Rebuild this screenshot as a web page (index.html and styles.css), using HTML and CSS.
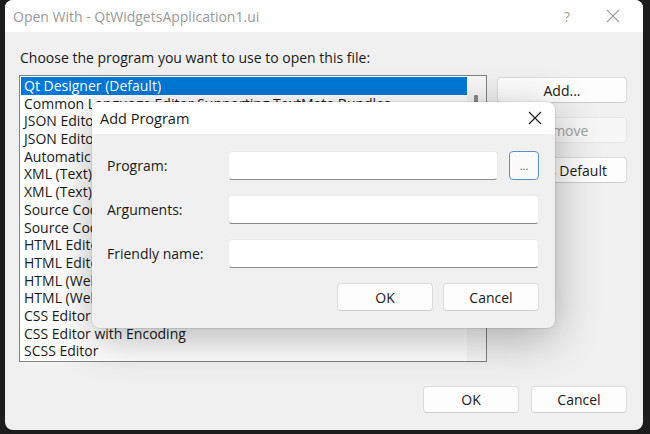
FILE: index.html
```html
<!DOCTYPE html>
<html>
<head>
<meta charset="utf-8">
<link rel="stylesheet" href="styles.css">
</head>
<body>
<div class="desk">
  <div class="win">
    <div class="titlebar">
      <span class="title">Open With - QtWidgetsApplication1.ui</span>
      <span class="tb-help">?</span>
      <span class="tb-close"><svg width="14" height="14" viewBox="0 0 14 14"><path d="M1 1L13 13M13 1L1 13" stroke="#a0a0a0" stroke-width="1.1" fill="none"/></svg></span>
    </div>
    <div class="body">
      <div class="prompt">Choose the program you want to use to open this file:</div>
      <div class="main">
        <div class="list">
          <div class="items">
            <div class="item sel">Qt Designer (Default)</div>
            <div class="item">Common Language Editor Supporting TextMate Bundles</div>
            <div class="item">JSON Editor</div>
            <div class="item">JSON Editor with Encoding</div>
            <div class="item">Automatic Editor Selector (XML)</div>
            <div class="item">XML (Text) Editor</div>
            <div class="item">XML (Text) Editor with Encoding</div>
            <div class="item">Source Code (Text) Editor</div>
            <div class="item">Source Code (Text) Editor With Encoding</div>
            <div class="item">HTML Editor</div>
            <div class="item">HTML Editor with Encoding</div>
            <div class="item">HTML (Web Forms) Editor</div>
            <div class="item">HTML (Web Forms) Editor with Encoding</div>
            <div class="item">CSS Editor</div>
            <div class="item">CSS Editor with Encoding</div>
            <div class="item">SCSS Editor</div>
          </div>
          <div class="scroll"><div class="thumb"></div></div>
        </div>
        <div class="side">
          <div class="btn side-btn">Add...</div>
          <div class="btn side-btn disabled">Remove</div>
          <div class="btn side-btn">Set as Default</div>
        </div>
      </div>
      <div class="bottom">
        <div class="btn bot-btn">OK</div>
        <div class="btn bot-btn">Cancel</div>
      </div>
    </div>
  </div>

  <div class="dlg">
    <div class="dlg-title">
      <span class="dlg-name">Add Program</span>
      <span class="dlg-close"><svg width="14" height="14" viewBox="0 0 14 14"><path d="M1 1L13 13M13 1L1 13" stroke="#1a1a1a" stroke-width="1.1" fill="none"/></svg></span>
    </div>
    <div class="dlg-body">
      <div class="row">
        <div class="lbl">Program:</div>
        <div class="inp short"></div>
        <div class="browse">...</div>
      </div>
      <div class="row">
        <div class="lbl">Arguments:</div>
        <div class="inp"></div>
      </div>
      <div class="row">
        <div class="lbl">Friendly name:</div>
        <div class="inp"></div>
      </div>
      <div class="dlg-btns">
        <div class="btn dlg-btn">OK</div>
        <div class="btn dlg-btn">Cancel</div>
      </div>
    </div>
  </div>
</div>
</body>
</html>
```

FILE: styles.css
```css
html, body {
  margin: 0;
  padding: 0;
}
body {
  background: #1c1c1c;
  font-family: "Open Sans", "Noto Sans", sans-serif;
  font-size: 14px;
  color: #1a1a1a;
}
.desk {
  position: relative;
  width: 650px;
  height: 434px;
  overflow: hidden;
}
.win {
  margin-left: 5px;
  width: 638px;
  height: 430px;
  background: #f0f0f0;
  border-radius: 8px;
  overflow: hidden;
  display: flex;
  flex-direction: column;
}
.titlebar {
  height: 32px;
  background: #ffffff;
  display: flex;
  align-items: center;
  padding-left: 8px;
}
.title {
  color: #9a9a9a;
  flex: 1;
  font-size: 14px;
}
.tb-help {
  color: #a0a0a0;
  font-size: 14px;
  width: 46px;
  text-align: center;
}
.tb-close {
  width: 46px;
  margin-right: 7px;
  display: flex;
  justify-content: center;
}
.body {
  flex: 1;
  display: flex;
  flex-direction: column;
  padding: 0 16px 0 14px;
}
.prompt {
  margin-top: 16px;
  height: 20px;
  line-height: 20px;
  padding-left: 1px;
}
.main {
  display: flex;
  margin-top: 7px;
  gap: 10px;
}
.list {
  width: 466px;
  height: 285px;
  border: 1px solid #828282;
  background: #ffffff;
  display: flex;
}
.items {
  flex: 1;
  padding: 1px 0 0 1px;
  overflow: hidden;
}
.item {
  height: 17.7px;
  line-height: 17.7px;
  padding-left: 3px;
  white-space: nowrap;
}
.item.sel {
  background: #0078d7;
  color: #ffffff;
}
.scroll {
  width: 19px;
  background: #f7f7f7;
  position: relative;
}
.thumb {
  position: absolute;
  left: 7px;
  top: 19px;
  width: 4px;
  height: 120px;
  background: #8a8a8a;
  border-radius: 1px;
}
.side {
  display: flex;
  flex-direction: column;
  gap: 14px;
  padding-top: 2px;
}
.btn {
  background: #fdfdfd;
  border: 1px solid #dcdcdc;
  border-bottom-color: #cccccc;
  border-radius: 4px;
  display: flex;
  align-items: center;
  justify-content: center;
  box-sizing: border-box;
}
.side-btn {
  width: 130px;
  height: 26px;
}
.side-btn.disabled {
  color: #a0a0a0;
  background: #f6f6f6;
  border-color: #e6e6e6;
}
.bottom {
  display: flex;
  justify-content: flex-end;
  gap: 12px;
  margin-top: 24px;
}
.bot-btn {
  width: 96px;
  height: 27px;
}
.dlg {
  position: absolute;
  left: 92px;
  top: 102px;
  width: 463px;
  height: 226px;
  border-radius: 8px;
  overflow: hidden;
  background: #f0f0f0;
  box-shadow: 0 10px 44px rgba(0, 0, 0, 0.3), 0 0 0 1px rgba(0, 0, 0, 0.08);
  display: flex;
  flex-direction: column;
}
.dlg-title {
  height: 32px;
  background: #ffffff;
  display: flex;
  align-items: center;
  padding-left: 8px;
}
.dlg-name {
  flex: 1;
  font-size: 14.5px;
}
.dlg-close {
  width: 40px;
  display: flex;
  justify-content: center;
}
.dlg-body {
  flex: 1;
  padding: 17px 16px 0 15px;
  display: flex;
  flex-direction: column;
  gap: 15px;
}
.row {
  display: flex;
  align-items: center;
  height: 29px;
}
.lbl {
  width: 121px;
  flex: none;
}
.inp {
  flex: 1;
  height: 29px;
  box-sizing: border-box;
  background: #ffffff;
  border: 1px solid #ececec;
  border-bottom: 1px solid #8c8c8c;
  border-radius: 4px;
}
.inp.short {
  flex: none;
  width: 270px;
}
.browse {
  margin-left: 11px;
  width: 30px;
  height: 29px;
  box-sizing: border-box;
  border: 1px solid #5a8fd0;
  border-radius: 4px;
  background: #fbfbfb;
  color: #555;
  font-size: 11px;
  display: flex;
  align-items: center;
  justify-content: center;
}
.dlg-btns {
  display: flex;
  justify-content: flex-end;
  gap: 10px;
  margin-top: 0;
}
.dlg-btn {
  width: 96px;
  height: 28px;
}
```
